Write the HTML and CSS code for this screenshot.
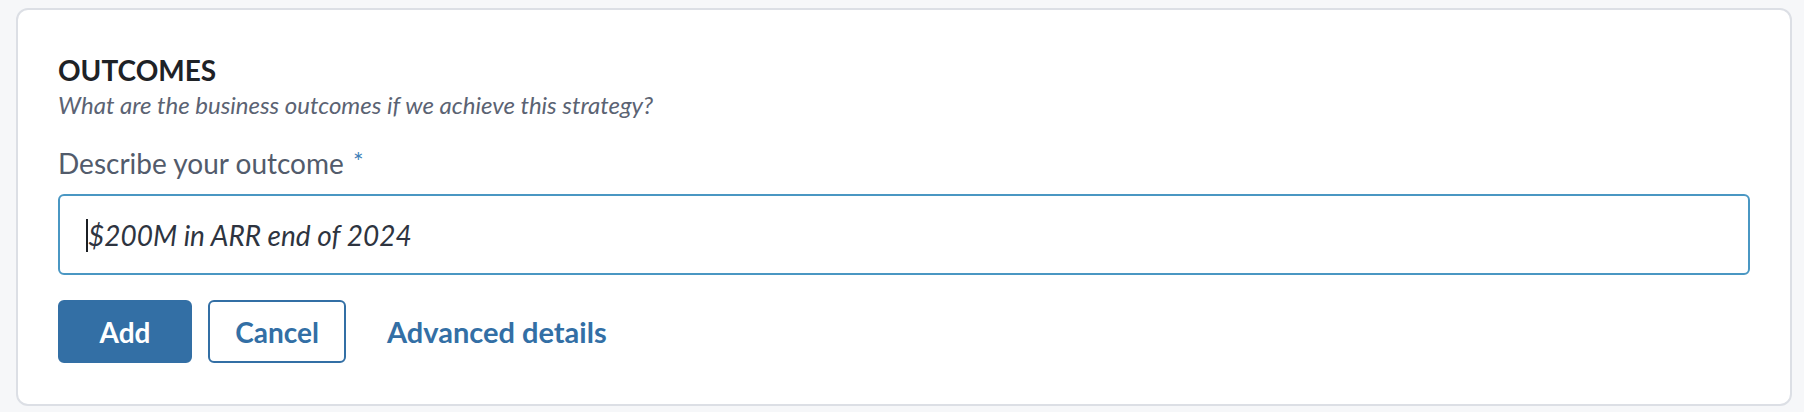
FILE: index.html
```html
<!DOCTYPE html>
<html lang="en">
<head>
<meta charset="utf-8">
<title>Outcomes</title>
<link rel="stylesheet" href="styles.css">
</head>
<body>
<section class="card">
  <h2 class="title">OUTCOMES</h2>
  <p class="subtitle">What are the business outcomes if we achieve this strategy?</p>
  <label class="label" for="outcome">Describe your outcome <span class="req">*</span></label>
  <div class="input" id="outcome"><span class="caret"></span><span class="value">$200M in ARR end of 2024</span></div>
  <div class="actions">
    <button class="btn btn-primary" type="button">Add</button>
    <button class="btn btn-outline" type="button">Cancel</button>
    <button class="btn btn-link" type="button">Advanced details</button>
  </div>
</section>
</body>
</html>
```
FILE: styles.css
```css
html, body {
  margin: 0;
  padding: 0;
  background: #f6f7f9;
  font-family: Lato, "Open Sans", "Liberation Sans", sans-serif;
}

body {
  padding: 8px 12px 6px 16px;
}

.card {
  background: #ffffff;
  border: 2px solid #dcdfe5;
  border-radius: 12px;
  padding: 43px 40px 39px 40px;
  height: 398px;
  box-sizing: border-box;
}

.title {
  margin: 0;
  font-size: 28px;
  line-height: 34px;
  font-weight: 700;
  color: #1e2226;
}

.subtitle {
  margin: 3px 0 0 0;
  font-size: 24px;
  line-height: 29px;
  font-style: italic;
  color: #5b6373;
}

.label {
  display: block;
  margin-top: 27px;
  font-size: 28px;
  line-height: 34px;
  color: #525b6b;
}

.req {
  color: #3f7fb8;
  font-size: 25px;
  line-height: 0;
  vertical-align: 3px;
  margin-left: 2px;
}

.input {
  margin-top: 14px;
  height: 81px;
  box-sizing: border-box;
  border: 2px solid #4a97c3;
  border-radius: 6px;
  padding: 0 24px;
  display: flex;
  align-items: center;
  font-size: 28px;
  font-style: italic;
  color: #2e3440;
}

.caret {
  display: inline-block;
  width: 2px;
  height: 33px;
  background: #1b1f24;
  margin-left: 2px;
  transform: translateY(1px);
}

.actions {
  margin-top: 25px;
  display: flex;
  gap: 16px;
  align-items: center;
}

.btn {
  height: 63px;
  box-sizing: border-box;
  border-radius: 6px;
  padding: 0 25px;
  font-family: inherit;
  font-size: 28px;
  font-weight: 700;
  cursor: pointer;
}

.btn-primary {
  min-width: 134px;
  background: #336fa5;
  color: #ffffff;
  border: 2px solid #336fa5;
}

.btn-outline {
  min-width: 138px;
  background: #ffffff;
  color: #336fa5;
  border: 2px solid #336fa5;
}

.btn-link {
  background: transparent;
  border: 2px solid transparent;
  color: #336fa5;
  font-size: 29px;
  padding: 0 23px;
}
```
